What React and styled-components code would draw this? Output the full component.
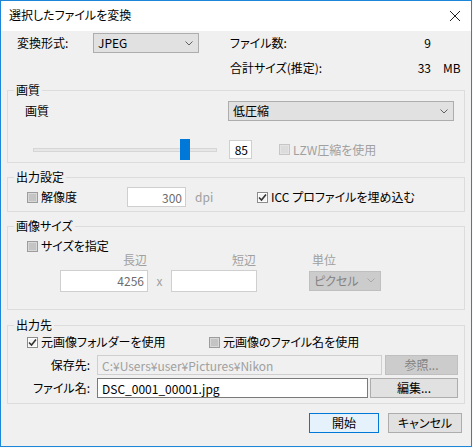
import React from "react";
import styled, { createGlobalStyle } from "styled-components";

const GlobalStyle = createGlobalStyle`
  html, body { margin: 0; padding: 0; background: #f7f9fb; }
  body {
    font-family: "Noto Sans CJK JP", "Noto Sans", sans-serif;
    font-size: 12px;
    line-height: 16px;
    color: #000;
    font-feature-settings: "palt";
  }
  * { box-sizing: border-box; }
`;

const Window = styled.div`
  width: 472px;
  height: 447px;
  border: 1px solid #1c86d8;
  background: #f0f0f0;
  display: flex;
  flex-direction: column;
`;

const TitleBar = styled.div`
  height: 30px;
  flex: none;
  background: #ffffff;
  display: flex;
  align-items: flex-start;
  justify-content: space-between;
  padding: 6px 10px 0 8px;
`;

const Title = styled.div`
  line-height: 16px;
`;

const CloseIcon = styled.svg`
  width: 12px;
  height: 12px;
  margin-top: 3px;
`;

const Body = styled.div`
  padding: 0 6px;
  display: flex;
  flex-direction: column;
`;

const TopGrid = styled.div`
  display: grid;
  grid-template-columns: 76px 106px 31px 165px 36px 26px;
  grid-auto-rows: 20px;
  row-gap: 5px;
  align-items: center;
  padding-left: 10px;
  margin-top: 2px;
`;

const Text = styled.span`
  color: ${(p) => p.$color || "#000"};
  text-align: ${(p) => p.$align || "left"};
  padding-left: ${(p) => p.$pl || 0}px;
  padding-right: ${(p) => p.$pr || 0}px;
  white-space: nowrap;
`;

const SelectBox = styled.div`
  width: ${(p) => p.$w}px;
  height: 20px;
  border: 1px solid ${(p) => (p.$disabled ? "#bfbfbf" : "#adadad")};
  background: ${(p) => (p.$disabled ? "#cccccc" : "#e1e1e1")};
  color: ${(p) => (p.$disabled ? "#838383" : "#000")};
  display: flex;
  align-items: center;
  justify-content: space-between;
  padding: 0 5px 0 4px;
  line-height: 16px;
`;

const Chevron = styled.svg`
  width: 8px;
  height: 5px;
`;

const Select = ({ w, value, disabled }) => (
  <SelectBox $w={w} $disabled={disabled}>
    <span>{value}</span>
    <Chevron viewBox="0 0 8 5">
      <polyline
        points="0.5,0.5 4,4 7.5,0.5"
        fill="none"
        stroke={disabled ? "#a8a8a8" : "#606060"}
        strokeWidth="1"
      />
    </Chevron>
  </SelectBox>
);

const Group = styled.fieldset`
  margin: ${(p) => p.$mt}px 0 0;
  padding: ${(p) => p.$pt}px 0 ${(p) => p.$pb}px;
  border: 1px solid #dcdcdc;
  min-width: 0;
`;

const Legend = styled.legend`
  padding: 0 2px;
  margin-left: 6px;
  line-height: 16px;
`;

const Row = styled.div`
  display: flex;
  align-items: center;
  height: ${(p) => p.$h}px;
  margin-top: ${(p) => p.$mt || 0}px;
  padding-left: ${(p) => p.$pl || 0}px;
`;

const Cell = styled.div`
  flex: none;
  width: ${(p) => p.$w}px;
  margin-left: ${(p) => p.$ml || 0}px;
  text-align: ${(p) => p.$align || "left"};
  color: ${(p) => p.$color || "#000"};
  white-space: nowrap;
`;

const Field = styled.input`
  flex: none;
  width: ${(p) => p.$w}px;
  height: ${(p) => p.$h || 20}px;
  margin: 0 0 0 ${(p) => p.$ml || 0}px;
  border: 1px solid ${(p) => (p.$dark ? "#7a7a7a" : "#cfcfcf")};
  background: ${(p) => (p.$disabled ? "#f0f0f0" : "#ffffff")};
  color: ${(p) => p.$color || "#000"};
  font: inherit;
  font-feature-settings: "palt";
  line-height: 16px;
  text-align: ${(p) => p.$align || "left"};
  padding: 0 ${(p) => (p.$align === "right" ? 3 : 4)}px;
  outline: none;
`;

const CheckLabel = styled.label`
  display: flex;
  align-items: center;
  gap: 3px;
  color: ${(p) => (p.$disabled ? "#a0a0a0" : "#000")};
  white-space: nowrap;
  margin-left: ${(p) => p.$ml || 0}px;
  flex: none;
  width: ${(p) => (p.$w ? `${p.$w}px` : "auto")};
`;

const Box = styled.span`
  width: 11px;
  height: 11px;
  flex: none;
  border: 1px solid ${(p) => (p.$disabled ? "#c6c6c6" : p.$checked ? "#8c8c8c" : "#9c9c9c")};
  background: ${(p) => (p.$disabled ? "#dcdcdc" : p.$checked ? "#f4f4f4" : "#c4c4c4")};
  box-shadow: inset 0 0 0 1px ${(p) => (p.$disabled ? "#e4e4e4" : p.$checked ? "#ffffff" : "#d8d8d8")};
  display: flex;
  align-items: center;
  justify-content: center;
`;

const CheckMark = styled.svg`
  width: 9px;
  height: 9px;
`;

const Check = ({ label, checked, disabled, ml, w }) => (
  <CheckLabel $disabled={disabled} $ml={ml} $w={w}>
    <Box $checked={checked} $disabled={disabled}>
      {checked && (
        <CheckMark viewBox="0 0 9 9">
          <polyline points="1,4.5 3.5,7 8,1.5" fill="none" stroke="#333" strokeWidth="1.6" />
        </CheckMark>
      )}
    </Box>
    <span>{label}</span>
  </CheckLabel>
);

const SliderWrap = styled.div`
  position: relative;
  flex: none;
  width: ${(p) => p.$w}px;
  height: 21px;
  margin-left: ${(p) => p.$ml}px;
  display: flex;
  align-items: center;
`;

const Track = styled.div`
  width: 100%;
  height: 4px;
  background: #e7e7e7;
  border: 1px solid #d6d6d6;
`;

const Thumb = styled.div`
  position: absolute;
  top: 0;
  width: 10px;
  height: 21px;
  background: #0078d7;
`;

const Slider = ({ w, ml, value }) => {
  const left = Math.round(((w - 10) * value) / 100) - 1;
  return (
    <SliderWrap $w={w} $ml={ml}>
      <Track />
      <Thumb style={{ left }} />
    </SliderWrap>
  );
};

const SizeGrid = styled.div`
  display: grid;
  grid-template-columns: 88px 23px 86px 52px 72px;
  grid-template-rows: 14px 21px;
  row-gap: 3px;
  align-items: center;
  padding-left: 52px;
  margin-top: 0;
`;

const Button = styled.button`
  flex: none;
  width: ${(p) => p.$w}px;
  height: 20px;
  margin: 0 0 0 ${(p) => p.$ml || 0}px;
  padding: 0;
  font: inherit;
  font-feature-settings: "palt";
  line-height: 16px;
  border: 1px solid ${(p) => (p.$primary ? "#0078d7" : p.$disabled ? "#bfbfbf" : "#adadad")};
  background: ${(p) => (p.$primary ? "#e5f1fb" : p.$disabled ? "#cccccc" : "#e1e1e1")};
  color: ${(p) => (p.$disabled ? "#838383" : "#000")};
`;

const ButtonRow = styled.div`
  display: flex;
  justify-content: flex-end;
  margin-top: 9px;
  padding-right: 3px;
`;

export default function App() {
  return (
    <>
      <GlobalStyle />
      <Window>
        <TitleBar>
          <Title>選択したファイルを変換</Title>
          <CloseIcon viewBox="0 0 12 12">
            <line x1="1" y1="1" x2="11" y2="11" stroke="#222" strokeWidth="1" />
            <line x1="11" y1="1" x2="1" y2="11" stroke="#222" strokeWidth="1" />
          </CloseIcon>
        </TitleBar>
        <Body>
          <TopGrid>
            <Text>変換形式:</Text>
            <Select w={106} value="JPEG" />
            <span />
            <Text>ファイル数:</Text>
            <Text $align="right">9</Text>
            <span />
            <span />
            <span />
            <span />
            <Text>合計サイズ(推定):</Text>
            <Text $align="right">33</Text>
            <Text $pl={12}>MB</Text>
          </TopGrid>

          <Group $mt={4} $pt={3} $pb={2}>
            <Legend>画質</Legend>
            <Row $h={20} $pl={17}>
              <Cell $w={203}>画質</Cell>
              <Select w={226} value="低圧縮" />
            </Row>
            <Row $h={21} $mt={18}>
              <Slider w={184} ml={25} value={85} />
              <Field $w={23} $ml={12} $h={19} $align="right" readOnly value="85" />
              <Check label="LZW圧縮を使用" disabled ml={27} />
            </Row>
          </Group>

          <Group $mt={6} $pt={2} $pb={4}>
            <Legend>出力設定</Legend>
            <Row $h={20} $pl={19}>
              <Check label="解像度" w={100} />
              <Field $w={59} $align="right" $color="#6d6d6d" readOnly value="300" />
              <Cell $w={62} $ml={9} $color="#a0a0a0">dpi</Cell>
              <Check label="ICC プロファイルを埋め込む" checked />
            </Row>
          </Group>

          <Group $mt={6} $pt={5} $pb={18}>
            <Legend>画像サイズ</Legend>
            <Row $h={14} $pl={19}>
              <Check label="サイズを指定" />
            </Row>
            <SizeGrid>
              <Text $align="right" $pr={1} $color="#a0a0a0">長辺</Text>
              <span />
              <Text $align="right" $pr={1} $color="#a0a0a0">短辺</Text>
              <span />
              <Text $pl={3} $color="#a0a0a0">単位</Text>
              <Field $w={88} $h={22} $align="right" $color="#6d6d6d" readOnly value="4256" />
              <Text $align="center" $color="#a0a0a0">x</Text>
              <Field $w={86} $h={22} readOnly value="" />
              <span />
              <Select w={72} value="ピクセル" disabled />
            </SizeGrid>
          </Group>

          <Group $mt={7} $pt={2} $pb={5}>
            <Legend>出力先</Legend>
            <Row $h={14} $pl={19}>
              <Check label="元画像フォルダーを使用" checked w={182} />
              <Check label="元画像のファイル名を使用" />
            </Row>
            <Row $h={20} $mt={6}>
              <Cell $w={82} $align="right">保存先:</Cell>
              <Field $w={285} $ml={7} $disabled $color="#a0a0a0" readOnly value="C:¥Users¥user¥Pictures¥Nikon" />
              <Button $w={73} $ml={3} $disabled>参照...</Button>
            </Row>
            <Row $h={20} $mt={3}>
              <Cell $w={82} $align="right">ファイル名:</Cell>
              <Field $w={271} $ml={7} $dark readOnly value="DSC_0001_00001.jpg" />
              <Button $w={88} $ml={2}>編集...</Button>
            </Row>
          </Group>

          <ButtonRow>
            <Button $w={70} $primary>開始</Button>
            <Button $w={74} $ml={9}>キャンセル</Button>
          </ButtonRow>
        </Body>
      </Window>
    </>
  );
}
